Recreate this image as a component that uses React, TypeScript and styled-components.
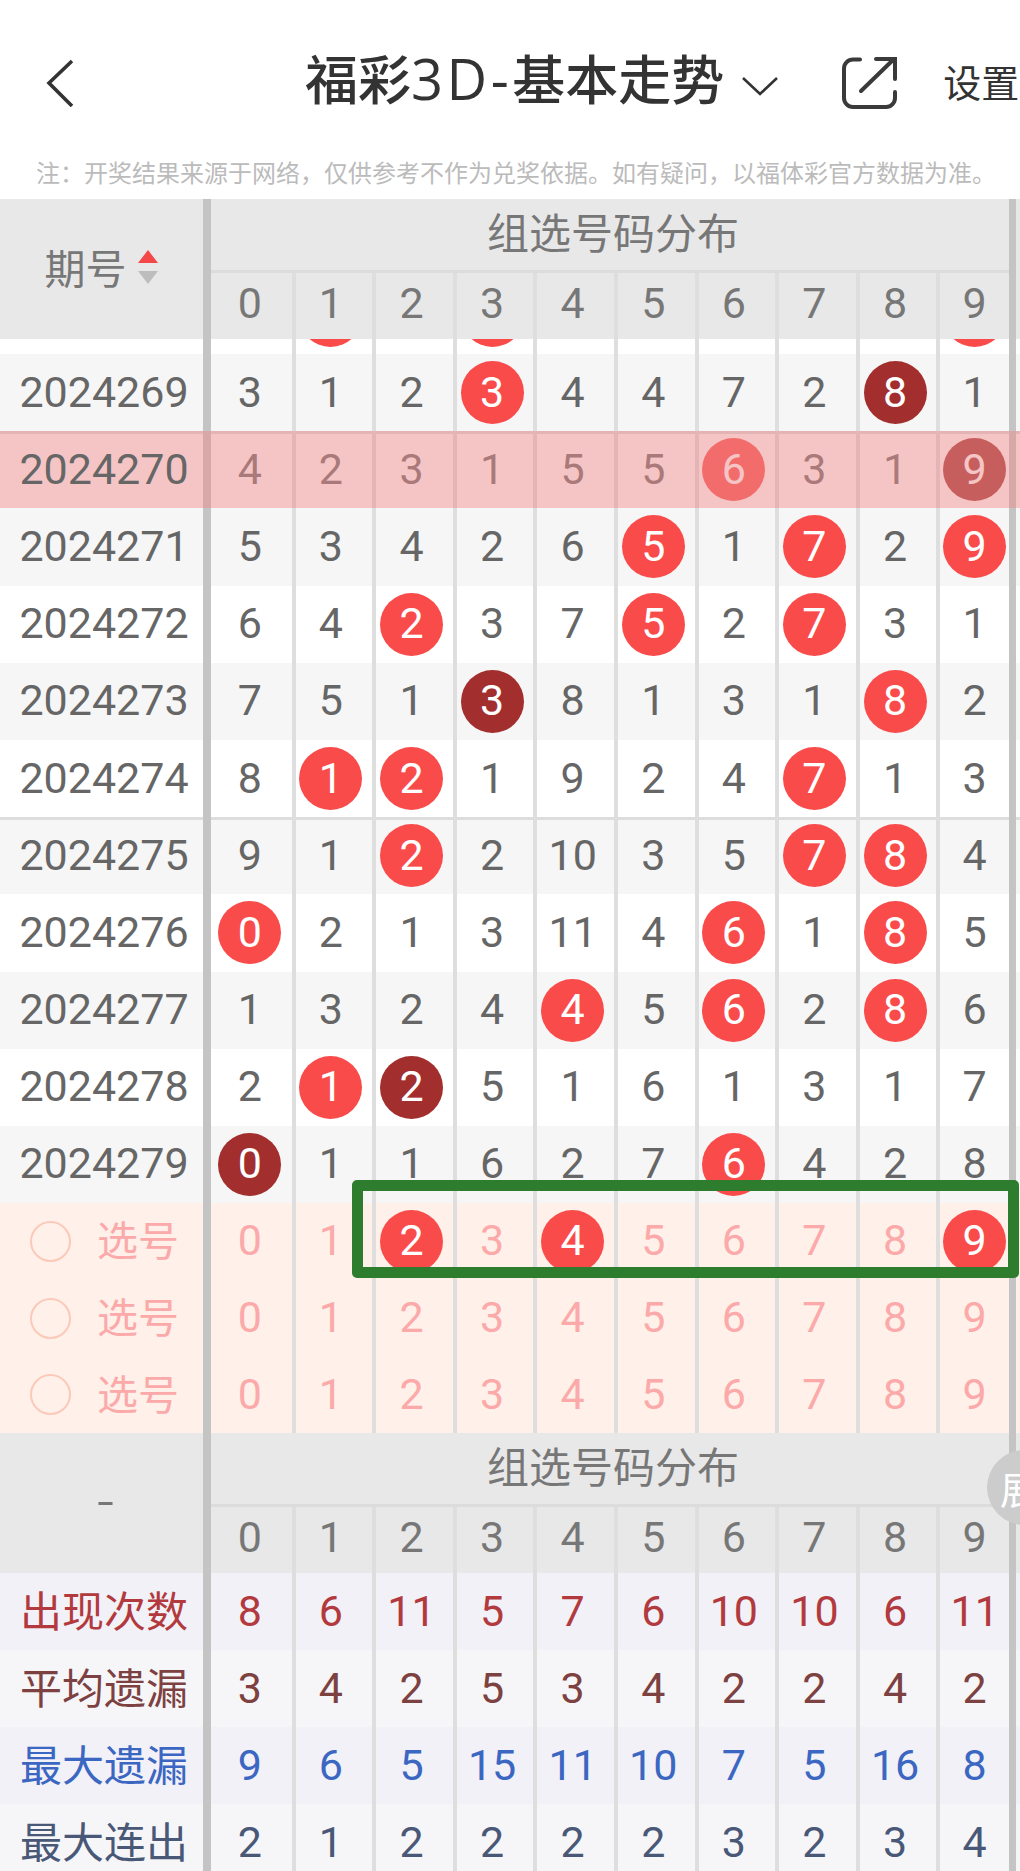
import React from 'react'
import styled, { createGlobalStyle } from 'styled-components'

const COLS = '211px repeat(9, 80.6px) 72.6px 1fr'

const GlobalStyle = createGlobalStyle`
  html, body {
    margin: 0;
    padding: 0;
    background: #fff;
  }
  * {
    box-sizing: border-box;
  }
`

const Page = styled.div`
  width: 1020px;
  height: 1871px;
  overflow: hidden;
  background: #fff;
  color: #666;
  font-family: Roboto, 'Noto Sans CJK SC', sans-serif;
`

const TopBar = styled.header`
  height: 150px;
  display: flex;
  align-items: center;
  padding-top: 12px;
  white-space: nowrap;
`

const BackIcon = styled.svg`
  width: 28px;
  height: 48px;
  margin: 4px 0 0 46px;
  flex: none;
`

const Title = styled.h1`
  margin: 0 0 3px 231px;
  font-size: 53px;
  font-weight: 500;
  color: #333;
  line-height: 1;
  flex: none;
`

const TitleLatin = styled.span`
  font-family: 'Open Sans', sans-serif;
  font-size: 56px;
  font-weight: 500;
  letter-spacing: 3.5px;
`

const CaretIcon = styled.svg`
  width: 38px;
  height: 20px;
  margin: 10px 0 0 17px;
  flex: none;
`

const ShareIcon = styled.svg`
  width: 60px;
  height: 60px;
  margin: 6px 0 0 60px;
  flex: none;
`

const Settings = styled.span`
  margin: 0 0 2px 44px;
  font-size: 38px;
  color: #333;
  flex: none;
`

const Note = styled.p`
  margin: 0;
  height: 49px;
  padding-left: 36px;
  font-size: 24px;
  line-height: 48px;
  color: #bbb;
  white-space: nowrap;
`

const Cell = styled.div<{ $pos: 'first' | 'mid' | 'last' }>`
  display: flex;
  align-items: center;
  justify-content: center;
  font-size: 43px;
  border-left: ${(p) => (p.$pos === 'first' ? 'none' : '4px solid #dedede')};
  padding-right: ${(p) => (p.$pos === 'first' ? 3 : p.$pos === 'mid' ? 6 : 0)}px;
  padding-bottom: 2px;
`

const Head = styled.div`
  display: grid;
  grid-template-columns: ${COLS};
  grid-template-rows: 73.5px 66.5px;
  background: #e8e8e8;
  color: #777;
  position: relative;

  ${Cell} {
    padding-bottom: 5px;
  }
`

const HeadLabel = styled.div`
  grid-row: 1 / 3;
  grid-column: 1;
  border-right: 8px solid #c4c4c4;
  display: flex;
  align-items: center;
  justify-content: center;
  font-size: 41px;
  padding-bottom: 6px;
`

const SortArrows = styled.svg`
  width: 22px;
  height: 36px;
  margin: 2px 0 0 10px;
`

const GroupTitle = styled.div`
  grid-row: 1;
  grid-column: 2 / 12;
  border-bottom: 3.5px solid #dcdcdc;
  display: flex;
  align-items: center;
  justify-content: center;
  padding: 0 0 7px 6px;
  font-size: 42px;
`

const HeadEnd = styled.div`
  grid-row: 1 / 3;
  grid-column: 12;
  border-left: 7px solid #c4c4c4;
`

const Row = styled.div<{ $bg?: string; $tone?: string; $rule?: boolean; $h?: number; $tint?: boolean }>`
  display: grid;
  grid-template-columns: ${COLS};
  height: ${(p) => p.$h ?? 77.2}px;
  background: ${(p) => p.$bg ?? '#fff'};
  color: ${(p) => p.$tone ?? '#666'};
  position: relative;
  box-shadow: ${(p) => (p.$rule ? 'inset 0 3px 0 #ddd' : 'none')};
  ${(p) =>
    p.$tint
      ? `&::after {
          content: '';
          position: absolute;
          inset: 0;
          background: rgba(235, 141, 141, 0.51);
        }`
      : ''}
`

const Stub = styled.div`
  height: 15px;
  overflow: hidden;
`

const StubInner = styled.div`
  margin-top: -62.2px;
`

const Label = styled.div<{ $color?: string; $size?: number; $lift?: number }>`
  border-right: 8px solid #c4c4c4;
  display: flex;
  align-items: center;
  justify-content: center;
  padding-left: 5px;
  padding-bottom: ${(p) => p.$lift ?? 2}px;
  color: ${(p) => p.$color ?? '#666'};
  font-size: ${(p) => p.$size ?? 43}px;
`

const LabelText = styled.span`
  position: relative;
  z-index: 2;
`

const Ball = styled.span<{ $dark?: boolean }>`
  flex: none;
  width: 63px;
  height: 63px;
  margin-bottom: -2px;
  padding-bottom: 2px;
  border-radius: 50%;
  display: flex;
  align-items: center;
  justify-content: center;
  background: ${(p) => (p.$dark ? '#a22e2e' : '#fa4b4b')};
  color: #fff;
`

const RowEnd = styled.div`
  border-left: 7px solid #c4c4c4;
`

const Picks = styled.div`
  position: relative;
`

const PickLabel = styled.div`
  border-right: 8px solid #c4c4c4;
  display: flex;
  align-items: center;
  padding-left: 30px;
  color: #fba9a9;
  font-size: 41px;
`

const Radio = styled.span`
  width: 41px;
  height: 41px;
  border-radius: 50%;
  border: 2px solid #fcc9b8;
  margin-right: 26px;
  flex: none;
`

const PickText = styled.span`
  margin-bottom: 6px;
`

const GreenBox = styled.div`
  position: absolute;
  left: 352px;
  top: -23px;
  width: 667px;
  height: 98px;
  border: 11px solid #2e7d2e;
  border-radius: 5px;
  z-index: 3;
`

const ExpandTab = styled.div`
  position: absolute;
  left: 987px;
  top: 17px;
  width: 75px;
  height: 75px;
  border-radius: 50%;
  background: #ccc;
  color: #fff;
  font-size: 38px;
  display: flex;
  align-items: center;
  padding-left: 13px;
  z-index: 2;
`

const Dash = styled.span`
  font-size: 60px;
  font-weight: 300;
  padding-left: 8px;
  margin-top: 2px;
`

function Cells({ values }: { values: string }) {
  const list = values.split(' ')
  return (
    <>
      {list.map((v, i) => {
        const pos = i === 0 ? 'first' : i === list.length - 1 ? 'last' : 'mid'
        if (v[0] === '*' || v[0] === '#') {
          return (
            <Cell key={i} $pos={pos}>
              <Ball $dark={v[0] === '#'}>{v.slice(1)}</Ball>
            </Cell>
          )
        }
        return (
          <Cell key={i} $pos={pos}>
            {v === '_' ? '' : v}
          </Cell>
        )
      })}
    </>
  )
}

function TableHead({ children, tab }: { children: React.ReactNode; tab?: boolean }) {
  return (
    <Head>
      <HeadLabel>{children}</HeadLabel>
      <GroupTitle>组选号码分布</GroupTitle>
      <Cells values="0 1 2 3 4 5 6 7 8 9" />
      <HeadEnd />
      {tab && <ExpandTab>展</ExpandTab>}
    </Head>
  )
}

const draws = [
  { no: '2024269', values: '3 1 2 *3 4 4 7 2 #8 1' },
  { no: '2024270', values: '4 2 3 1 5 5 *6 3 1 #9', tint: true, rule: true },
  { no: '2024271', values: '5 3 4 2 6 *5 1 *7 2 *9' },
  { no: '2024272', values: '6 4 *2 3 7 *5 2 *7 3 1' },
  { no: '2024273', values: '7 5 1 #3 8 1 3 1 *8 2' },
  { no: '2024274', values: '8 *1 *2 1 9 2 4 *7 1 3' },
  { no: '2024275', values: '9 1 *2 2 10 3 5 *7 *8 4', rule: true },
  { no: '2024276', values: '*0 2 1 3 11 4 *6 1 *8 5' },
  { no: '2024277', values: '1 3 2 4 *4 5 *6 2 *8 6' },
  { no: '2024278', values: '2 *1 #2 5 1 6 1 3 1 7' },
  { no: '2024279', values: '#0 1 1 6 2 7 *6 4 2 8' },
]

const picks = ['0 1 *2 3 *4 5 6 7 8 *9', '0 1 2 3 4 5 6 7 8 9', '0 1 2 3 4 5 6 7 8 9']

const stats = [
  { name: '出现次数', values: '8 6 11 5 7 6 10 10 6 11', tone: '#b23a3e', bg: '#f1f1f7' },
  { name: '平均遗漏', values: '3 4 2 5 3 4 2 2 4 2', tone: '#7d4141', bg: '#f6f6f8' },
  { name: '最大遗漏', values: '9 6 5 15 11 10 7 5 16 8', tone: '#3b66c2', bg: '#f1f1f7' },
  { name: '最大连出', values: '2 1 2 2 2 2 3 2 3 4', tone: '#4a5878', bg: '#f6f6f8' },
]

export default function App() {
  return (
    <Page>
      <GlobalStyle />
      <TopBar>
        <BackIcon viewBox="0 0 28 48" fill="none" stroke="#333" strokeWidth="3.6">
          <path d="M26 2 L3 24 L26 47" />
        </BackIcon>
        <Title>
          福彩<TitleLatin>3D-</TitleLatin>基本走势
        </Title>
        <CaretIcon viewBox="0 0 38 20" fill="none" stroke="#333" strokeWidth="2.6">
          <path d="M2 2 L19 18 L36 2" />
        </CaretIcon>
        <ShareIcon viewBox="0 0 60 60" fill="none" stroke="#3a3a3a" strokeWidth="4" strokeLinecap="round">
          <path d="M21 5.5 H14 A9 9 0 0 0 5 14.5 V44 A9 9 0 0 0 14 53 H47 A9 9 0 0 0 56 44 V38" />
          <path d="M22 37 L55 5" />
          <path d="M37 5 H56 V25" />
        </ShareIcon>
        <Settings>设置</Settings>
      </TopBar>
      <Note>注：开奖结果来源于网络，仅供参考不作为兑奖依据。如有疑问，以福体彩官方数据为准。</Note>

      <TableHead>
        期号
        <SortArrows viewBox="0 0 22 36">
          <path d="M11 1 L21 14 H1 Z" fill="#f44848" />
          <path d="M1 22 H21 L11 35 Z" fill="#bdbdbd" />
        </SortArrows>
      </TableHead>

      <Stub>
        <StubInner>
          <Row>
            <Label />
            <Cells values="_ * _ * _ _ _ _ _ *" />
            <RowEnd />
          </Row>
        </StubInner>
      </Stub>

      {draws.map((d, i) => (
        <Row key={d.no} $bg={i % 2 === 0 ? '#f6f6f6' : '#fff'} $tint={d.tint} $rule={d.rule}>
          <Label>
            <LabelText>{d.no}</LabelText>
          </Label>
          <Cells values={d.values} />
          <RowEnd />
        </Row>
      ))}

      <Picks>
        {picks.map((values, i) => (
          <Row key={i} $bg="#fff0ea" $tone="#fba9a9" $h={76.7}>
            <PickLabel>
              <Radio />
              <PickText>选号</PickText>
            </PickLabel>
            <Cells values={values} />
            <RowEnd />
          </Row>
        ))}
        <GreenBox />
      </Picks>

      <TableHead tab>
        <Dash>-</Dash>
      </TableHead>

      {stats.map((s) => (
        <Row key={s.name} $bg={s.bg} $tone={s.tone} $h={77}>
          <Label $color={s.tone} $size={42} $lift={7}>
            {s.name}
          </Label>
          <Cells values={s.values} />
          <RowEnd />
        </Row>
      ))}
    </Page>
  )
}
